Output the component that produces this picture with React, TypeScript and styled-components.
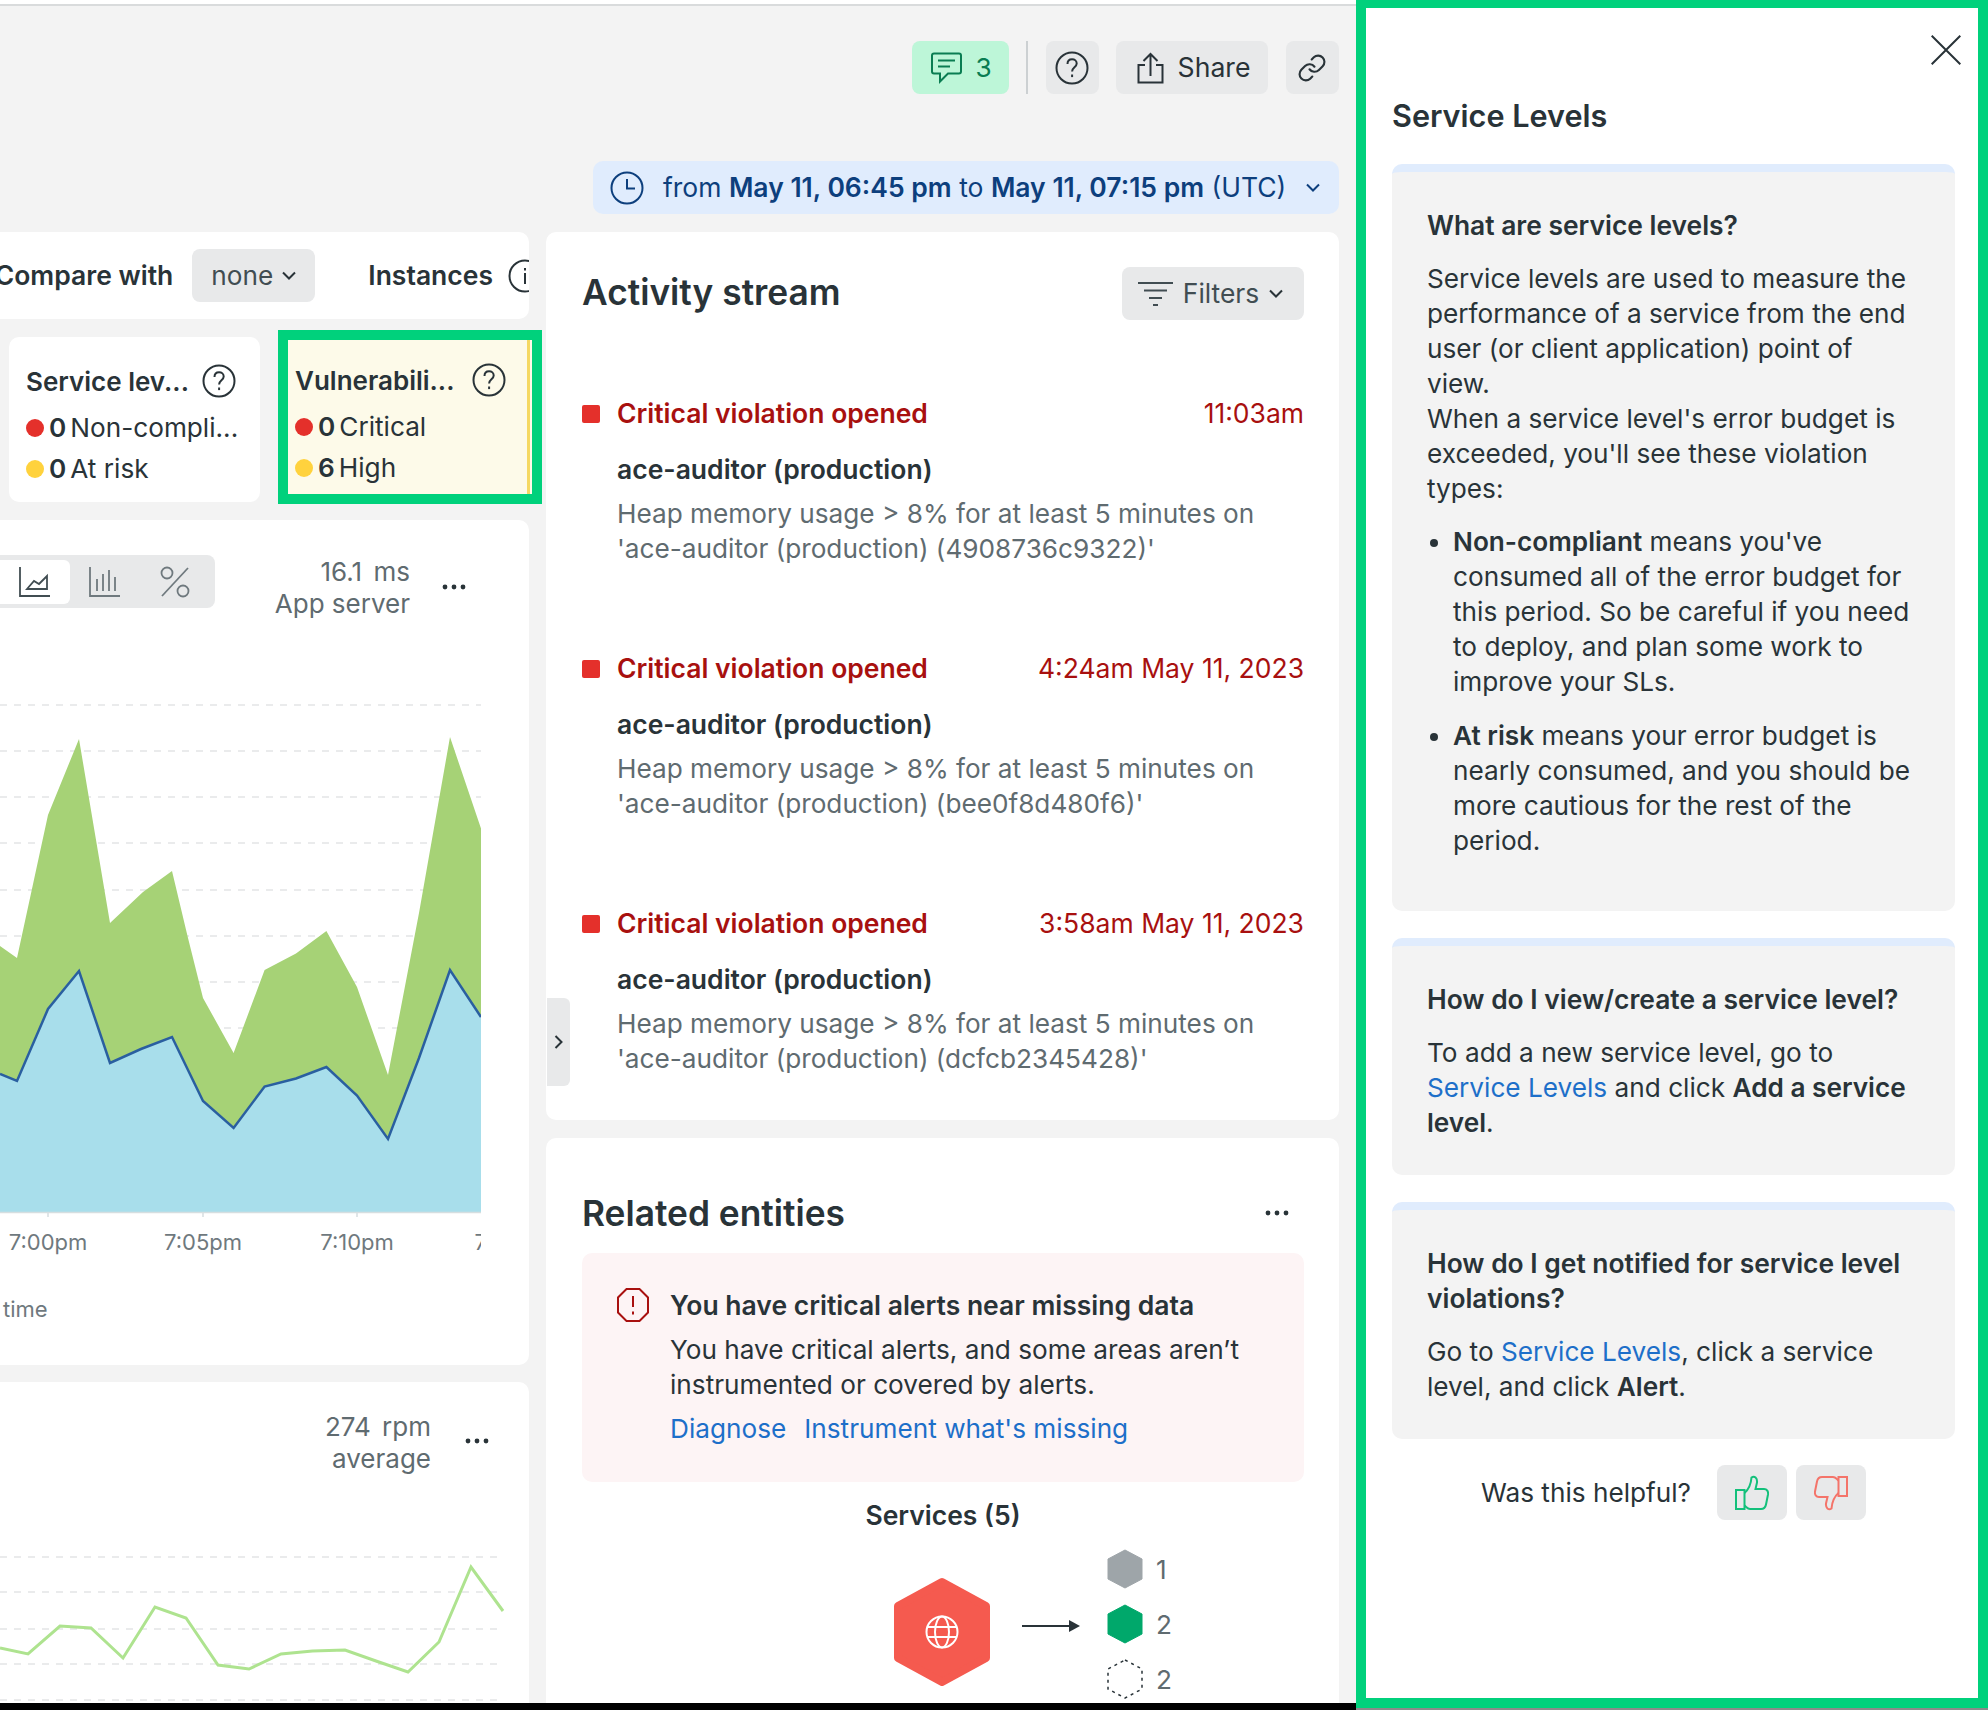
import React from "react";
import styled, { createGlobalStyle } from "styled-components";
import { Link as LinkIcon } from "lucide-react";

const Global = createGlobalStyle`
  html, body { margin: 0; padding: 0; background: #f3f3f3; }
  #root { width: 1988px; height: 1710px; overflow: hidden; }
  * { box-sizing: border-box; }
  body { font-family: Inter, "Noto Sans", "Liberation Sans", sans-serif; font-size: 26.2px; line-height: 35px; color: #293338; }
  svg { display: block; flex: none; }
`;

const Page = styled.div`
  display: flex;
  width: 1988px;
  height: 1710px;
`;
const Main = styled.div`
  width: 1356px;
  height: 1710px;
  display: flex;
  flex-direction: column;
  overflow: hidden;
`;
const TopStrip = styled.div`
  height: 6px;
  flex: none;
  background: #fff;
  border-bottom: 2px solid #d9dbdc;
`;
const Viewport = styled.div`
  flex: 1;
  min-height: 0;
  overflow: hidden;
`;
const BlackBar = styled.div`
  height: 7px;
  flex: none;
  background: #000;
`;
const Actions = styled.div`
  display: flex;
  justify-content: flex-end;
  align-items: center;
  padding: 35px 17px 0 0;
`;
const ActionBtn = styled.div<{ $w: number; $ml?: number }>`
  width: ${(p) => p.$w}px;
  height: 53px;
  margin-left: ${(p) => p.$ml ?? 0}px;
  border-radius: 8px;
  background: #e8e9ea;
  display: flex;
  align-items: center;
  justify-content: center;
  gap: 14px;
  font-size: 26.2px;
  color: #293338;
  padding-right: 2px;
`;
const ShareBtn = styled(ActionBtn)`
  font-size: 26.6px;
  padding: 0 0 0 3px;
`;
const CommentBtn = styled(ActionBtn)`
  background: #bdf6d8;
  color: #0a7d52;
  gap: 12px;
  padding: 0 0 0 2px;
`;
const VDivider = styled.div`
  width: 2px;
  height: 53px;
  background: #ccd0d2;
  margin-left: 17px;
`;
const TimeRow = styled.div`
  display: flex;
  justify-content: flex-end;
  padding: 67px 17px 0 0;
`;
const TimeBar = styled.div`
  width: 746px;
  height: 53px;
  background: #e0ecfd;
  border-radius: 10px;
  display: flex;
  align-items: center;
  padding-left: 17px;
  color: #0d3f7d;
  font-size: 26.5px;
  white-space: nowrap;
  b { font-weight: 600; }
`;
const TimeText = styled.span`
  margin-left: 19px;
`;
const TimeChevron = styled.span`
  margin-left: 20px;
`;
const Columns = styled.div`
  display: grid;
  grid-template-columns: 529px 793px;
  column-gap: 17px;
  margin-top: 18px;
`;
const LeftCol = styled.div`
  display: flex;
  flex-direction: column;
`;
const RightCol = styled.div`
  display: flex;
  flex-direction: column;
`;
const CompareCard = styled.div`
  height: 87px;
  background: #fff;
  border-radius: 0 10px 10px 0;
  display: flex;
  justify-content: flex-end;
  align-items: center;
  overflow: hidden;
  white-space: nowrap;
`;
const CompareInner = styled.div`
  display: flex;
  align-items: center;
  margin-right: -13px;
  flex: none;
`;
const Strong = styled.span`
  font-weight: 600;
  font-size: 26.5px;
`;
const Select = styled.div`
  width: 123px;
  height: 53px;
  margin: 0 53px 0 19px;
  border-radius: 8px;
  background: #e8e9ea;
  display: flex;
  align-items: center;
  justify-content: center;
  gap: 9px;
  font-size: 26.2px;
  color: #414d52;
`;
const TilesRow = styled.div`
  display: flex;
  align-items: flex-start;
  gap: 18px;
  padding-left: 9px;
  margin-top: 11px;
  height: 174px;
`;
const Tile = styled.div<{ $hl?: boolean }>`
  flex: none;
  background: ${(p) => (p.$hl ? "#fdfae9" : "#fff")};
  border-radius: ${(p) => (p.$hl ? 0 : 10)}px;
  ${(p) =>
    p.$hl
      ? "width: 264px; height: 174px; border: 10px solid #00d17c; padding: 22px 0 0 7px; position: relative;"
      : "width: 251px; height: 165px; margin-top: 7px; padding: 26px 0 0 17px;"}
`;
const YellowEdge = styled.div`
  position: absolute;
  right: 2px;
  top: 0;
  bottom: 0;
  width: 3px;
  background: #f5d862;
`;
const TileHead = styled.div`
  display: flex;
  align-items: center;
  justify-content: space-between;
  height: 36px;
  font-weight: 600;
  font-size: 26px;
  white-space: nowrap;
`;
const TileIconWrap = styled.div<{ $r: number }>`
  margin-right: ${(p) => p.$r}px;
`;
const InfoWrap = styled.div`
  margin-left: 15px;
`;
const TileStat = styled.div`
  display: flex;
  align-items: center;
  height: 41px;
  font-size: 26.2px;
  white-space: nowrap;
  margin-top: 8px;
  b { font-weight: 600; margin: 0 4px 0 5px; }
  & + & { margin-top: 0; }
`;
const Dot = styled.span<{ $c: string }>`
  width: 18px;
  height: 18px;
  border-radius: 50%;
  background: ${(p) => p.$c};
  flex: none;
`;
const ChartCard = styled.div<{ $h?: number }>`
  background: #fff;
  border-radius: 0 10px 10px 0;
  margin-top: ${(p) => (p.$h ? 16 : 17)}px;
  height: ${(p) => p.$h ?? 340}px;
  overflow: hidden;
`;
const ChartHead = styled.div<{ $top: number; $right: number }>`
  display: flex;
  align-items: flex-start;
  padding: ${(p) => p.$top}px ${(p) => p.$right}px 0 0;
  height: ${(p) => p.$top + 54}px;
`;
const Seg = styled.div`
  width: 215px;
  height: 53px;
  background: #e8e9ea;
  border-radius: 0 8px 8px 0;
  display: flex;
  align-items: center;
  padding-right: 5px;
`;
const SegItem = styled.div<{ $on?: boolean }>`
  flex: 1;
  height: ${(p) => (p.$on ? 44 : 53)}px;
  background: ${(p) => (p.$on ? "#fff" : "transparent")};
  border-radius: 0 6px 6px 0;
  display: flex;
  align-items: center;
  justify-content: center;
`;
const Stat = styled.div`
  margin-left: auto;
  text-align: right;
  font-size: 26px;
  line-height: 32px;
  color: #5f6b70;
  margin-top: 1px;
  white-space: nowrap;
  &::first-line { word-spacing: 4px; }
`;
const MoreDots = styled.div<{ $top: number; $ml: number; $mr?: number }>`
  margin: ${(p) => p.$top}px ${(p) => p.$mr ?? 0}px 0 ${(p) => p.$ml}px;
`;
const MainChart = styled.svg`
  margin-top: 82px;
`;
const SmallChart = styled.svg`
  margin-top: 76px;
`;
const StreamCard = styled.div`
  position: relative;
  background: #fff;
  border-radius: 10px;
  height: 888px;
  padding: 35px 35px 0 36px;
`;
const SideTab = styled.div`
  position: absolute;
  left: 1px;
  top: 766px;
  width: 23px;
  height: 88px;
  background: #e8e9ea;
  border-radius: 0 6px 6px 0;
  display: flex;
  align-items: center;
  justify-content: center;
`;
const CardHead = styled.div`
  display: flex;
  justify-content: space-between;
  align-items: center;
`;
const H2 = styled.h2<{ $shift?: number }>`
  margin: ${(p) => p.$shift ?? 0}px 0 0;
  font-size: 35.3px;
  line-height: 44px;
  font-weight: 600;
`;
const FiltersBtn = styled.div`
  width: 182px;
  height: 53px;
  border-radius: 8px;
  background: #e8e9ea;
  display: flex;
  align-items: center;
  justify-content: center;
  gap: 10px;
  font-size: 26.4px;
  color: #414d52;
  padding-right: 5px;
`;
const Event = styled.div<{ $first?: boolean }>`
  margin-top: ${(p) => (p.$first ? 76 : 85)}px;
`;
const EventHead = styled.div`
  display: flex;
  align-items: center;
  height: 35px;
  color: #a8100f;
  font-size: 26.5px;
`;
const Sq = styled.span`
  width: 18px;
  height: 18px;
  background: #e4302b;
  border-radius: 2px;
  margin-right: 17px;
`;
const EventTitle = styled.span`
  font-weight: 600;
  flex: 1;
`;
const EventName = styled.div`
  margin: 21px 0 0 35px;
  font-weight: 600;
  font-size: 26.5px;
`;
const EventDesc = styled.div`
  margin: 9px 0 0 35px;
  color: #5f6b70;
  font-size: 26.2px;
`;
const RelatedCard = styled.div`
  background: #fff;
  border-radius: 10px;
  margin-top: 18px;
  height: 600px;
  padding: 52px 35px 0 36px;
`;
const Alert = styled.div`
  margin-top: 17px;
  height: 229px;
  background: #fdf4f5;
  border-radius: 10px;
  display: flex;
  padding: 35px 0 0 35px;
  gap: 21px;
  font-size: 26.2px;
`;
const AlertTitle = styled.div`
  font-weight: 600;
  font-size: 26.5px;
`;
const AlertBody = styled.div`
  margin-top: 9px;
`;
const AlertLinks = styled.div`
  margin-top: 9px;
  display: flex;
  gap: 18px;
`;
const A = styled.span`
  color: #1d6fc9;
`;
const ServicesTitle = styled.div`
  margin-top: 16px;
  text-align: center;
  font-weight: 600;
  font-size: 26.5px;
`;
const Diagram = styled.div`
  display: flex;
  align-items: flex-start;
  padding-left: 311px;
  margin-top: 16px;
`;
const BigHex = styled.div`
  margin-top: 28px;
`;
const ArrowWrap = styled.div`
  margin: 71px 27px 0 31px;
`;
const HexList = styled.div`
  display: flex;
  flex-direction: column;
  gap: 15px;
`;
const HexRow = styled.div`
  display: flex;
  align-items: center;
  height: 40px;
  gap: 13px;
  color: #5f6b70;
  font-size: 26.2px;
`;
const PanelWrap = styled.div`
  width: 632px;
  height: 1710px;
  background: #8a8a8a;
`;
const Panel = styled.div`
  width: 632px;
  height: 1708px;
  background: #fff;
  border: 10px solid #00d17c;
  border-top-width: 8px;
  padding: 27px 23px 0 26px;
`;
const CloseRow = styled.div`
  display: flex;
  justify-content: flex-end;
  margin-right: -6px;
`;
const PanelTitle = styled.h1`
  margin: 31px 0 0;
  font-size: 30.6px;
  line-height: 40px;
  font-weight: 600;
`;
const Help = styled.section<{ $mt: number; $pb: number }>`
  margin-top: ${(p) => p.$mt}px;
  background: #f3f3f3;
  border-top: 8px solid #e0ecfd;
  border-radius: 10px;
  padding: 36px 38px ${(p) => p.$pb}px 35px;
  font-size: 26.2px;
  p { margin: 0; }
  b { font-weight: 600; }
`;
const HelpHead = styled.h3`
  margin: 0 0 18px;
  font-size: 26.4px;
  line-height: 35px;
  font-weight: 600;
`;
const Bullets = styled.ul`
  margin: 18px 0 0;
  padding: 0 0 0 26px;
  li + li { margin-top: 19px; }
`;
const Feedback = styled.div`
  margin-top: 26px;
  display: flex;
  justify-content: center;
  align-items: center;
  font-size: 26.2px;
`;
const ThumbBtn = styled.div<{ $ml: number }>`
  width: 70px;
  height: 55px;
  margin-left: ${(p) => p.$ml}px;
  border-radius: 8px;
  background: #e8e9ea;
  display: flex;
  align-items: center;
  justify-content: center;
`;

const Chevron = ({ c = "#293338" }: { c?: string }) => (
  <svg width="14" height="9" viewBox="0 0 14 9" fill="none" stroke={c} strokeWidth="2">
    <path d="M1 1.5l6 6 6-6" />
  </svg>
);
const Question = () => (
  <svg width="34" height="34" viewBox="0 0 34 34" fill="none" stroke="#293338" strokeWidth="2">
    <circle cx="17" cy="17" r="15.5" />
    <path d="M12.5 13c0-3 2-4.7 4.6-4.7s4.6 1.7 4.6 4.2c0 3.8-4.6 3.9-4.6 8" />
    <path d="M17.1 23.5v2.6" />
  </svg>
);
const More = () => (
  <svg width="24" height="6" viewBox="0 0 24 6" fill="#293338">
    <circle cx="3" cy="3" r="2.4" />
    <circle cx="12" cy="3" r="2.4" />
    <circle cx="21" cy="3" r="2.4" />
  </svg>
);
const Comment = () => (
  <svg width="32" height="32" viewBox="0 0 32 32" fill="none" stroke="#0a7d52" strokeWidth="2">
    <path d="M3 1.5h25c1.2 0 2 .8 2 2v16c0 1.2-.8 2-2 2H17l-8 8v-8H3c-1.200 0-2-.8-2-2v-16c0-1.200.8-2 2-2z" />
    <path d="M7 8.500h17M7 14.500h12" />
  </svg>
);
const ShareIcon = () => (
  <svg width="27" height="32" viewBox="0 0 27 32" fill="none" stroke="#293338" strokeWidth="2">
    <path d="M8 13H1.500v17.500h24V13H19" />
    <path d="M13.500 24V2M6.500 9l7-7 7 7" />
  </svg>
);
const Clock = () => (
  <svg width="34" height="34" viewBox="0 0 34 34" fill="none" stroke="#0d3f7d" strokeWidth="2">
    <circle cx="17" cy="17" r="15.500" />
    <path d="M17 8v9.500h8" />
  </svg>
);
const AreaIcon = () => (
  <svg width="32" height="32" viewBox="0 0 32 32" fill="none" stroke="#414d52" strokeWidth="1.800">
    <path d="M1 1v29h30" />
    <path d="M8 23l7-8 5 3 8-8v13z" />
  </svg>
);
const BarsIcon = () => (
  <svg width="32" height="32" viewBox="0 0 32 32" fill="none" stroke="#6f797e" strokeWidth="1.800">
    <path d="M1 1v29h30" />
    <path d="M8 25v-12M14 25v-17M20 25v-21M26 25v-14" />
  </svg>
);
const PercentIcon = () => (
  <svg width="30" height="32" viewBox="0 0 30 32" fill="none" stroke="#6f797e" strokeWidth="1.800">
    <circle cx="7" cy="7" r="5.500" />
    <circle cx="23" cy="25" r="5.500" />
    <path d="M28 2L2 30" />
  </svg>
);
const InfoCircle = () => (
  <svg width="34" height="34" viewBox="0 0 34 34" fill="none" stroke="#293338" strokeWidth="2">
    <circle cx="17" cy="17" r="15.500" />
    <path d="M17 14v11M17 9v2.500" />
  </svg>
);
const FilterIcon = () => (
  <svg width="35" height="26" viewBox="0 0 35 26" fill="none" stroke="#414d52" strokeWidth="2.200">
    <path d="M0 2h35M6 9.500h23M11 17h13M15 24h5" />
  </svg>
);
const AlertIcon = () => (
  <svg width="32" height="34" viewBox="0 0 32 34" fill="none" stroke="#a8100f" strokeWidth="2">
    <path d="M9.500 1h13L31 9.500v15L22.500 33h-13L1 24.500v-15z" />
    <path d="M16 8v11M16 23.500v3" />
  </svg>
);
const Hex = ({ fill, dashed }: { fill?: string; dashed?: boolean }) => (
  <svg width="36" height="40" viewBox="0 0 36 40" fill={fill ?? "none"} stroke={dashed ? "#293338" : fill} strokeWidth={dashed ? 1.5 : 1} strokeDasharray={dashed ? "3 4" : undefined} strokeLinejoin="round">
    <path d="M18 1l17 9v20L18 39 1 30V10z" />
  </svg>
);
const BigHexIcon = () => (
  <svg width="98" height="110" viewBox="0 0 98 110">
    <polygon points="49,5 93,29 93,81 49,105 5,81 5,29" fill="#f55a4f" stroke="#f55a4f" strokeWidth="8" strokeLinejoin="round" />
    <g fill="none" stroke="#fff" strokeWidth="2">
      <circle cx="49" cy="55" r="15.500" />
      <ellipse cx="49" cy="55" rx="7" ry="15.500" />
      <path d="M34 50h30M34 60h30" />
    </g>
  </svg>
);
const Arrow = () => (
  <svg width="58" height="12" viewBox="0 0 58 12">
    <path d="M0 6h48" stroke="#293338" strokeWidth="2" />
    <path d="M47 0l11 6-11 6z" fill="#293338" />
  </svg>
);
const ThumbUp = () => (
  <svg width="34" height="36" viewBox="0 0 34 36" fill="none" stroke="#13c07b" strokeWidth="2">
    <path d="M1 15h8.500v19H1z" />
    <path d="M9.500 18C13 15 16 9 16.500 2.500c3-2 6 .5 5.500 5L20.500 14H29c3 0 4.500 2.500 4 5.500l-2 10c-.6 3-2.500 4.500-5 4.500H15c-2.500 0-3.500-2-5.500-3.500" />
  </svg>
);
const ThumbDown = () => (
  <svg width="34" height="36" viewBox="0 0 34 36" fill="none" stroke="#f4746a" strokeWidth="2">
    <g transform="rotate(180 17 18)">
      <path d="M1 15h8.500v19H1z" />
      <path d="M9.500 18C13 15 16 9 16.500 2.500c3-2 6 .5 5.500 5L20.500 14H29c3 0 4.500 2.500 4 5.500l-2 10c-.6 3-2.500 4.500-5 4.500H15c-2.500 0-3.500-2-5.500-3.500" />
    </g>
  </svg>
);

const GREEN = "0,945 17,957 48,814 79,738 110,922 143,891 172,870 187.500,935 203,997 233.600,1052 264.600,969 296,952.500 326.400,930 357,986 388,1074 419,912 450,736 481,827.500";
const BLUE = "0,1073 17,1080 48,1008 79,970 110,1062 141,1048 172,1036 203,1100 233.600,1127 264.600,1085.500 296,1077.500 326.400,1066 357,1094.500 388,1138 419,1057 450,969 481,1016";
const LINE = "0,1648 28,1654 60,1626 91,1628 123,1658 155,1607 186,1618 218,1665 249,1669 281,1654 312.500,1651 345,1650 376,1661 408,1672 439,1642 471,1567 503,1611";

const MainChartSvg = () => (
  <MainChart width="529" height="640" viewBox="0 690 529 640">
    <svg x="0" y="690" width="481" height="640" viewBox="0 690 481 640">
      {[704, 750, 796, 842, 889, 935, 981, 1027].map((y) => (
        <line key={y} x1="0" x2="481" y1={y} y2={y} stroke="#e3e5e6" strokeWidth="1.500" strokeDasharray="7 7" />
      ))}
      <polygon points={`${GREEN} 481,1211 0,1211`} fill="#a6d276" />
      <polygon points={`${BLUE} 481,1211 0,1211`} fill="#a8deeb" />
      <polyline points={BLUE} fill="none" stroke="#2a5fa0" strokeWidth="2.500" />
      <line x1="0" x2="481" y1="1211.500" y2="1211.500" stroke="#d6dee0" strokeWidth="1.500" />
      {[48, 203, 357].map((x) => (
        <line key={x} x1={x} x2={x} y1="1212" y2="1216" stroke="#d6dee0" strokeWidth="1.500" />
      ))}
      <g fontFamily="Inter, sans-serif" fontSize="22" fill="#6f797e" textAnchor="middle">
        <text x="48" y="1249">7:00pm</text>
        <text x="203" y="1249">7:05pm</text>
        <text x="357" y="1249">7:10pm</text>
        <text x="511" y="1249">7:15pm</text>
      </g>
      <text x="3" y="1316" fontFamily="Inter, sans-serif" fontSize="22" fill="#6f797e">time</text>
    </svg>
  </MainChart>
);
const SmallChartSvg = () => (
  <SmallChart width="529" height="170" viewBox="0 1540 529 170">
    {[1557, 1592, 1629, 1664, 1700].map((y) => (
      <line key={y} x1="0" x2="503" y1={y} y2={y} stroke="#e3e5e6" strokeWidth="1.500" strokeDasharray="7 7" />
    ))}
    <polyline points={LINE} fill="none" stroke="#aee38f" strokeWidth="3" />
  </SmallChart>
);

const events = [
  { time: "11:03am", id: "4908736c9322" },
  { time: "4:24am May 11, 2023", id: "bee0f8d480f6" },
  { time: "3:58am May 11, 2023", id: "dcfcb2345428" },
];

export default function App() {
  return (
    <>
      <Global />
      <Page>
        <Main>
          <TopStrip />
          <Viewport>
            <Actions>
              <CommentBtn $w={97}>
                <Comment />
                3
              </CommentBtn>
              <VDivider />
              <ActionBtn $w={53} $ml={18}>
                <Question />
              </ActionBtn>
              <ShareBtn $w={152} $ml={17}>
                <ShareIcon />
                Share
              </ShareBtn>
              <ActionBtn $w={53} $ml={18}>
                <LinkIcon size={30} strokeWidth={1.7} color="#293338" />
              </ActionBtn>
            </Actions>
            <TimeRow>
              <TimeBar>
                <Clock />
                <TimeText>
                  from <b>May 11, 06:45 pm</b> to <b>May 11, 07:15 pm</b> (UTC)
                </TimeText>
                <TimeChevron>
                  <Chevron c="#0d3f7d" />
                </TimeChevron>
              </TimeBar>
            </TimeRow>
            <Columns>
              <LeftCol>
                <CompareCard>
                  <CompareInner>
                    <Strong>Compare with</Strong>
                    <Select>
                      none <Chevron />
                    </Select>
                    <Strong>Instances</Strong>
                    <InfoWrap>
                      <InfoCircle />
                    </InfoWrap>
                  </CompareInner>
                </CompareCard>
                <TilesRow>
                  <Tile>
                    <TileHead>
                      Service lev...
                      <TileIconWrap $r={24}>
                        <Question />
                      </TileIconWrap>
                    </TileHead>
                    <TileStat>
                      <Dot $c="#e4302b" />
                      <b>0</b>Non-compli...
                    </TileStat>
                    <TileStat>
                      <Dot $c="#ffd23d" />
                      <b>0</b>At risk
                    </TileStat>
                  </Tile>
                  <Tile $hl>
                    <YellowEdge />
                    <TileHead>
                      Vulnerabili...
                      <TileIconWrap $r={26}>
                        <Question />
                      </TileIconWrap>
                    </TileHead>
                    <TileStat>
                      <Dot $c="#e4302b" />
                      <b>0</b>Critical
                    </TileStat>
                    <TileStat>
                      <Dot $c="#ffd23d" />
                      <b>6</b>High
                    </TileStat>
                  </Tile>
                </TilesRow>
                <ChartCard $h={845}>
                  <ChartHead $top={35} $right={63}>
                    <Seg>
                      <SegItem $on>
                        <AreaIcon />
                      </SegItem>
                      <SegItem>
                        <BarsIcon />
                      </SegItem>
                      <SegItem>
                        <PercentIcon />
                      </SegItem>
                    </Seg>
                    <Stat>
                      16.1 ms
                      <br />
                      App server
                    </Stat>
                    <MoreDots $top={29} $ml={32}>
                      <More />
                    </MoreDots>
                  </ChartHead>
                  <MainChartSvg />
                </ChartCard>
                <ChartCard>
                  <ChartHead $top={28} $right={40}>
                    <Stat>
                      274 rpm
                      <br />
                      average
                    </Stat>
                    <MoreDots $top={28} $ml={34}>
                      <More />
                    </MoreDots>
                  </ChartHead>
                  <SmallChartSvg />
                </ChartCard>
              </LeftCol>
              <RightCol>
                <StreamCard>
                  <SideTab>
                    <svg width="9" height="14" viewBox="0 0 9 14" fill="none" stroke="#293338" strokeWidth="2">
                      <path d="M1.500 1l6 6-6 6" />
                    </svg>
                  </SideTab>
                  <CardHead>
                    <H2 $shift={-1}>Activity stream</H2>
                    <FiltersBtn>
                      <FilterIcon />
                      Filters
                      <Chevron />
                    </FiltersBtn>
                  </CardHead>
                  {events.map((e, i) => (
                    <Event key={e.id} $first={i === 0}>
                      <EventHead>
                        <Sq />
                        <EventTitle>Critical violation opened</EventTitle>
                        <span>{e.time}</span>
                      </EventHead>
                      <EventName>ace-auditor (production)</EventName>
                      <EventDesc>
                        Heap memory usage &gt; 8% for at least 5 minutes on
                        <br />
                        'ace-auditor (production) ({e.id})'
                      </EventDesc>
                    </Event>
                  ))}
                </StreamCard>
                <RelatedCard>
                  <CardHead>
                    <H2 $shift={2}>Related entities</H2>
                    <MoreDots $top={0} $ml={0} $mr={15}>
                      <More />
                    </MoreDots>
                  </CardHead>
                  <Alert>
                    <AlertIcon />
                    <div>
                      <AlertTitle>You have critical alerts near missing data</AlertTitle>
                      <AlertBody>
                        You have critical alerts, and some areas aren’t
                        <br />
                        instrumented or covered by alerts.
                      </AlertBody>
                      <AlertLinks>
                        <A>Diagnose</A>
                        <A>Instrument what's missing</A>
                      </AlertLinks>
                    </div>
                  </Alert>
                  <ServicesTitle>Services (5)</ServicesTitle>
                  <Diagram>
                    <BigHex>
                      <BigHexIcon />
                    </BigHex>
                    <ArrowWrap>
                      <Arrow />
                    </ArrowWrap>
                    <HexList>
                      <HexRow>
                        <Hex fill="#9ea5a9" />1
                      </HexRow>
                      <HexRow>
                        <Hex fill="#00a86b" />2
                      </HexRow>
                      <HexRow>
                        <Hex dashed />2
                      </HexRow>
                    </HexList>
                  </Diagram>
                </RelatedCard>
              </RightCol>
            </Columns>
          </Viewport>
          <BlackBar />
        </Main>
        <PanelWrap>
          <Panel>
            <CloseRow>
              <svg width="30" height="30" viewBox="0 0 30 30" stroke="#293338" strokeWidth="2">
                <path d="M.7.7l28.600 28.600M29.300.7L.7 29.300" />
              </svg>
            </CloseRow>
            <PanelTitle>Service Levels</PanelTitle>
            <Help $mt={28} $pb={53}>
              <HelpHead>What are service levels?</HelpHead>
              <p>
                Service levels are used to measure the performance of a service from the end user (or client application) point of view.
                <br />
                When a service level's error budget is exceeded, you'll see these violation types:
              </p>
              <Bullets>
                <li>
                  <b>Non-compliant</b> means you've consumed all of the error budget for this period. So be careful if you need to deploy, and plan some work to improve your SLs.
                </li>
                <li>
                  <b>At risk</b> means your error budget is nearly consumed, and you should be more cautious for the rest of the period.
                </li>
              </Bullets>
            </Help>
            <Help $mt={27} $pb={35}>
              <HelpHead>How do I view/create a service level?</HelpHead>
              <p>
                To add a new service level, go to <A>Service Levels</A> and click <b>Add a service level</b>.
              </p>
            </Help>
            <Help $mt={27} $pb={35}>
              <HelpHead>How do I get notified for service level violations?</HelpHead>
              <p>
                Go to <A>Service Levels</A>, click a service level, and click <b>Alert</b>.
              </p>
            </Help>
            <Feedback>
              Was this helpful?
              <ThumbBtn $ml={26}>
                <ThumbUp />
              </ThumbBtn>
              <ThumbBtn $ml={9}>
                <ThumbDown />
              </ThumbBtn>
            </Feedback>
          </Panel>
        </PanelWrap>
      </Page>
    </>
  );
}
